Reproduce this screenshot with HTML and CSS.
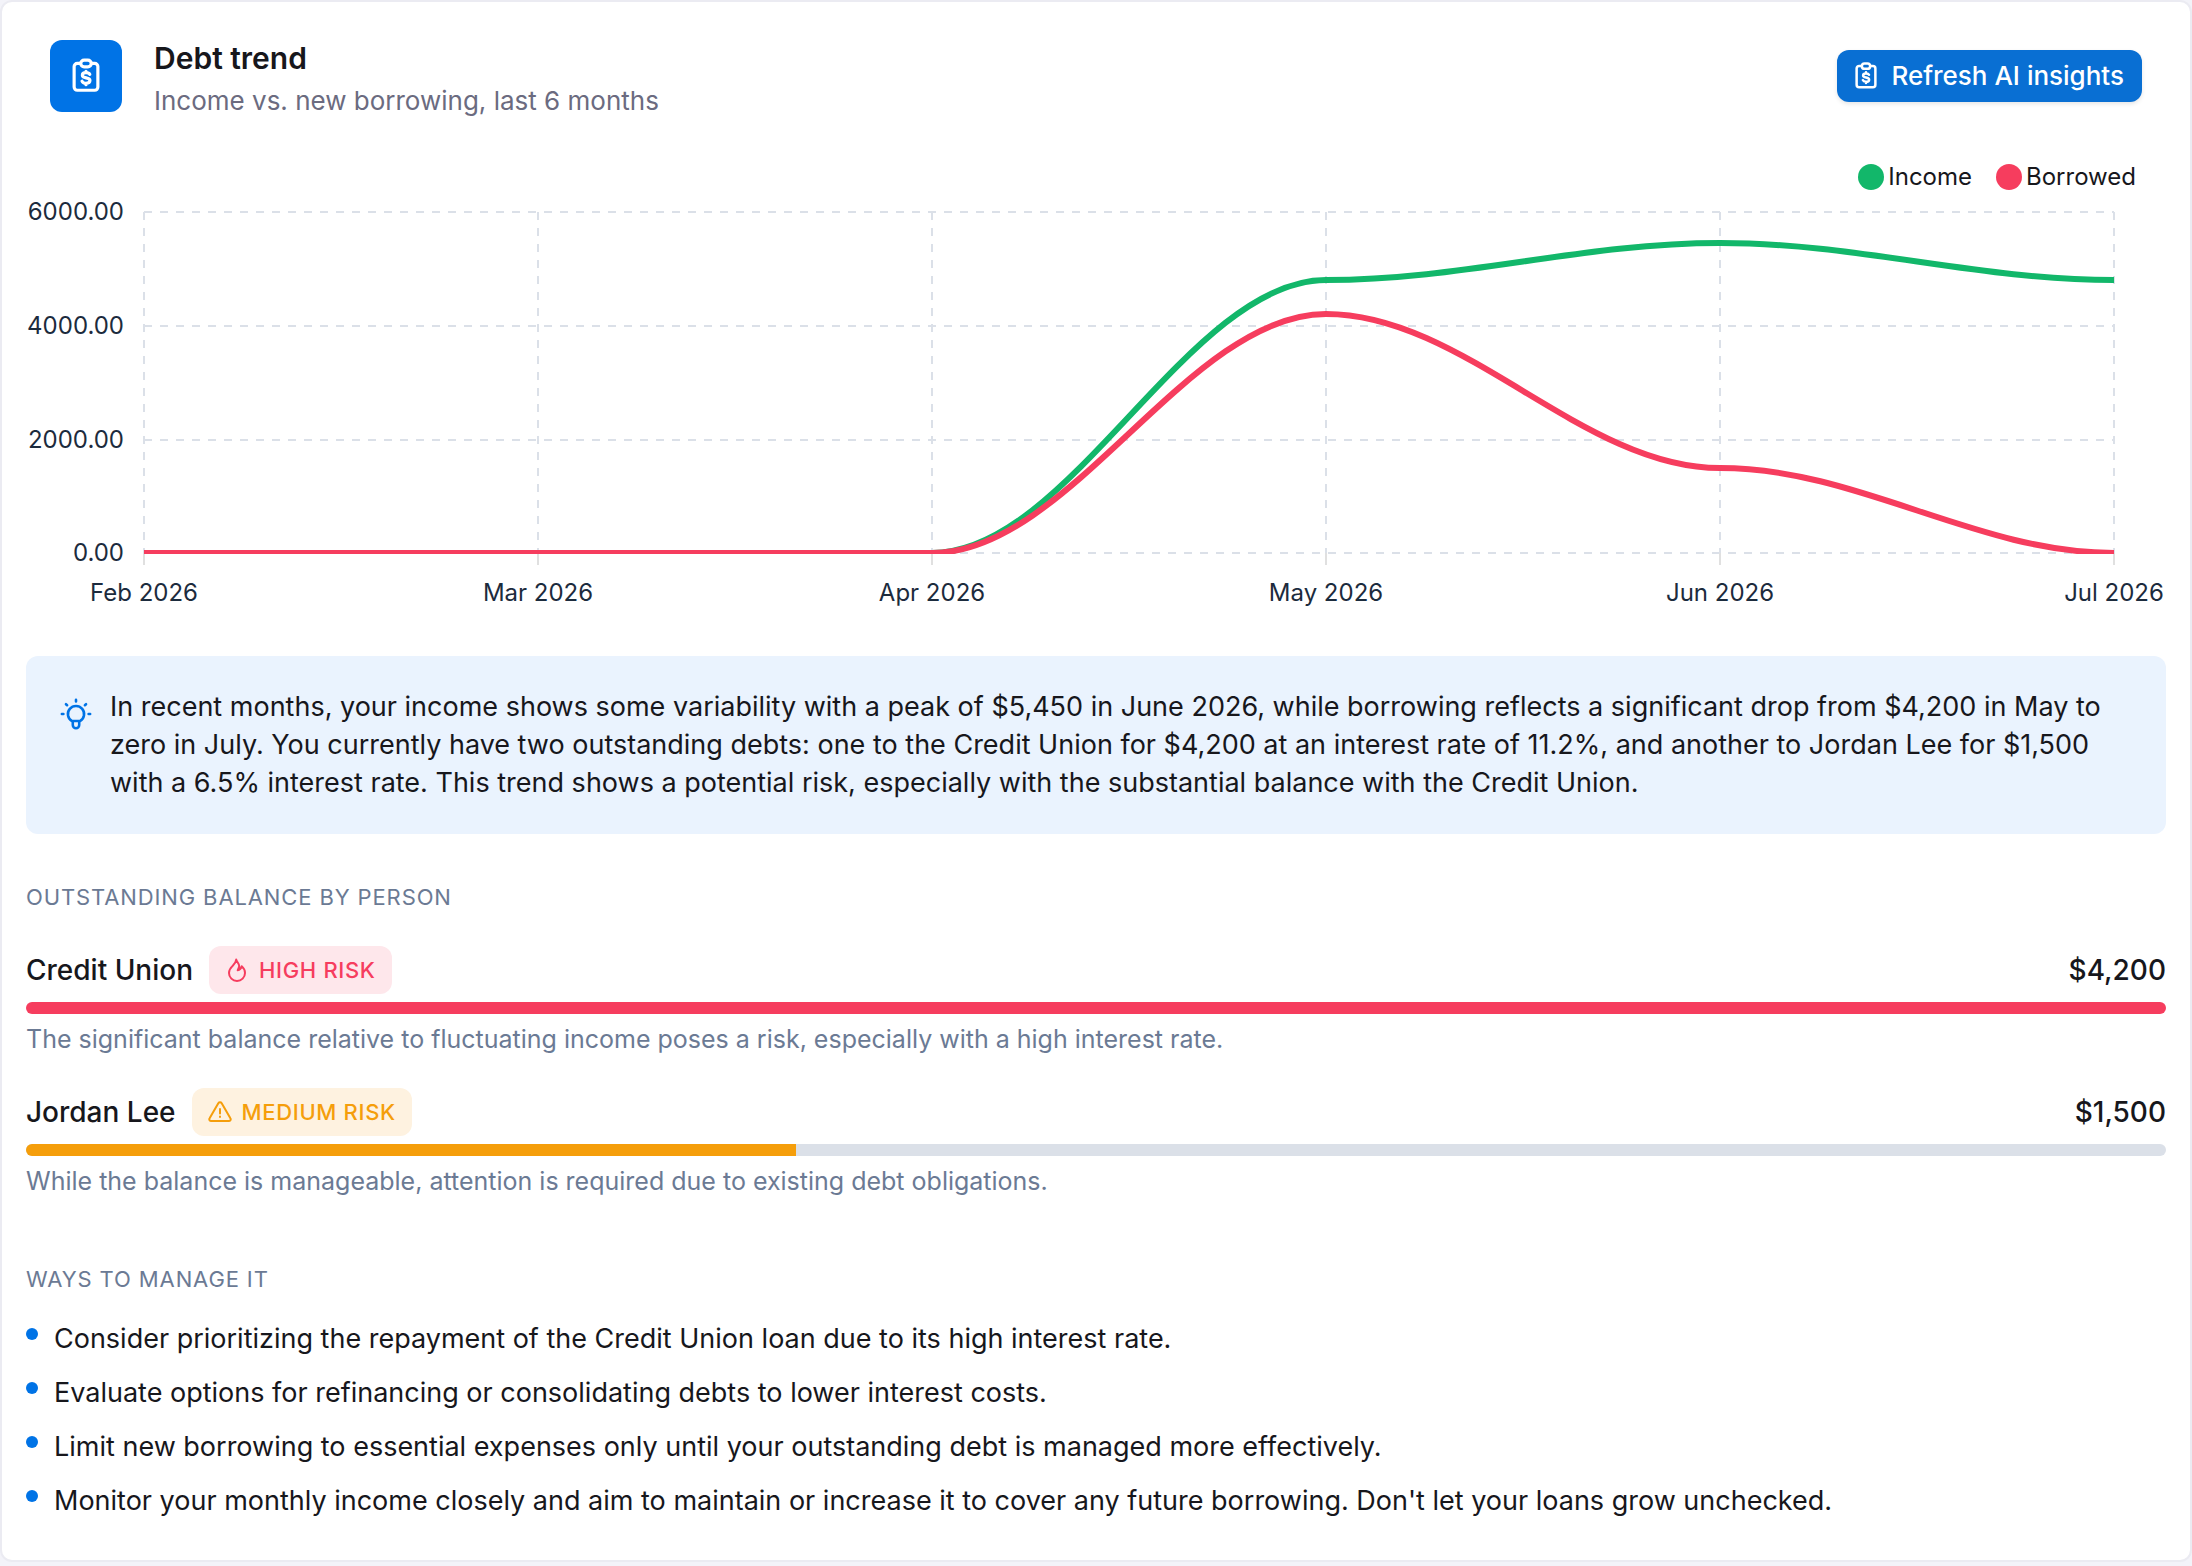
FILE: index.html
```
<!DOCTYPE html>
<html lang="en">
<head>
    <meta charset="UTF-8">
    <meta name="viewport" content="width=device-width, initial-scale=1.0">
    <title>Debt trend</title>
    <link rel="stylesheet" href="styles.css">
</head>
<body>
    <!-- Icons -->
    <svg class="sprite" aria-hidden="true">
        <symbol id="icon-clipboard" viewBox="0 0 24 24">
            <path d="M8.5 4H6.5a2 2 0 0 0-2 2v13a2 2 0 0 0 2 2h11a2 2 0 0 0 2-2V6a2 2 0 0 0-2-2h-2"/>
            <rect x="8.7" y="2" width="6.6" height="4.2" rx="2.1"/>
            <path d="M14.4 11c-.3-.7-1.200-1.100-2.400-1.100-1.400 0-2.300.6-2.300 1.600 0 2.400 4.800 1 4.800 3.400 0 1-1 1.700-2.500 1.700-1.300 0-2.200-.5-2.500-1.300M12 9v.9M12 16.600v.9"/>
        </symbol>
        <symbol id="icon-bulb" viewBox="-2 -2 28 28">
            <path d="M12 1v1.200M23 12h-1.200M2.200 12H1M19.800 4.400l-.9.8M4.200 4.400l.9.8"/>
            <path d="M8.900 17.500a6.300 6.300 0 1 1 6.200 0zM9.500 17.800v2.800a2.500 2.500 0 0 0 5 0v-2.800"/>
        </symbol>
        <symbol id="icon-flame" viewBox="0 0 24 24">
            <path d="M11.2 1.500c.6 2.600 3 4 3 6.500 0 1.800-1.200 2.600-1.500 4.300 2.300-.3 3.400-1.800 4-4 2 1.700 3.300 4 3.300 6.700a8 8 0 0 1-16 0c0-3 1.300-4.900 3.400-6.900 1.800-1.700 3.600-3.300 3.800-6.600z"/>
        </symbol>
        <symbol id="icon-warning" viewBox="0 0 24 24">
            <path d="M10.300 3.200 1.600 18.200a1.900 1.900 0 0 0 1.700 2.900h17.400a1.900 1.900 0 0 0 1.700-2.900L13.700 3.200a2 2 0 0 0-3.400 0zM12 9v4.500M12 16.600v.4"/>
        </symbol>
    </svg>

    <div class="card">
        <div class="header">
            <div class="header-icon">
                <svg class="icon"><use href="#icon-clipboard"/></svg>
            </div>
            <div class="header-text">
                <h2>Debt trend</h2>
                <p>Income vs. new borrowing, last 6 months</p>
            </div>
            <button class="refresh-btn" type="button">
                <svg class="icon"><use href="#icon-clipboard"/></svg>
                Refresh AI insights
            </button>
        </div>

        <!-- Chart -->
        <div class="legend">
            <span class="legend-item"><span class="dot income"></span>Income</span>
            <span class="legend-item"><span class="dot borrowed"></span>Borrowed</span>
        </div>
        <svg class="chart" viewBox="0 0 2140 424" role="img" aria-label="Income and borrowing by month">
            <defs>
                <clipPath id="plot"><rect x="118" y="0" width="1971" height="358"/></clipPath>
            </defs>
            <path class="grid" d="M118 16H2088M118 130H2088M118 244H2088M118 357H2088"/>
            <path class="grid" d="M118 16V357M512 16V357M906 16V357M1300 16V357M1694 16V357M2088 16V357"/>
            <path class="ticks" d="M118 357v12M512 357v12M906 357v12M1300 357v12M1694 357v12M2088 357v12"/>
            <g clip-path="url(#plot)">
                <path class="line income" d="M118 357H906C1044 357 1162 84 1300 84C1438 84 1556 47 1694 47C1832 47 1950 84 2088 84"/>
                <path class="line borrowed" d="M118 357H906C1044 357 1162 118 1300 118C1438 118 1556 272 1694 272C1832 272 1950 357 2088 357"/>
            </g>
            <g class="label-y">
                <text x="98" y="24">6000.00</text>
                <text x="98" y="138">4000.00</text>
                <text x="98" y="252">2000.00</text>
                <text x="98" y="365">0.00</text>
            </g>
            <g class="label-x">
                <text x="118" y="405">Feb 2026</text>
                <text x="512" y="405">Mar 2026</text>
                <text x="906" y="405">Apr 2026</text>
                <text x="1300" y="405">May 2026</text>
                <text x="1694" y="405">Jun 2026</text>
                <text x="2088" y="405">Jul 2026</text>
            </g>
        </svg>

        <div class="insight">
            <svg class="icon"><use href="#icon-bulb"/></svg>
            <p>In recent months, your income shows some variability with a peak of $5,450 in June 2026, while borrowing reflects a significant drop from $4,200 in May to zero in July. You currently have two outstanding debts: one to the Credit Union for $4,200 at an interest rate of 11.2%, and another to Jordan Lee for $1,500 with a 6.5% interest rate. This trend shows a potential risk, especially with the substantial balance with the Credit Union.</p>
        </div>

        <!-- Balances -->
        <h3>Outstanding balance by person</h3>
        <div class="person">
            <div class="person-row">
                <span class="name">Credit Union</span>
                <span class="chip high"><svg class="icon"><use href="#icon-flame"/></svg>High risk</span>
                <span class="amount">$4,200</span>
            </div>
            <div class="bar"><div class="bar-fill high" style="width: 100%"></div></div>
            <p>The significant balance relative to fluctuating income poses a risk, especially with a high interest rate.</p>
        </div>
        <div class="person">
            <div class="person-row">
                <span class="name">Jordan Lee</span>
                <span class="chip medium"><svg class="icon"><use href="#icon-warning"/></svg>Medium risk</span>
                <span class="amount">$1,500</span>
            </div>
            <div class="bar"><div class="bar-fill medium" style="width: 36%"></div></div>
            <p>While the balance is manageable, attention is required due to existing debt obligations.</p>
        </div>

        <!-- Tips -->
        <h3 class="tips-title">Ways to manage it</h3>
        <ul class="tips">
            <li>Consider prioritizing the repayment of the Credit Union loan due to its high interest rate.</li>
            <li>Evaluate options for refinancing or consolidating debts to lower interest costs.</li>
            <li>Limit new borrowing to essential expenses only until your outstanding debt is managed more effectively.</li>
            <li>Monitor your monthly income closely and aim to maintain or increase it to cover any future borrowing. Don't let your loans grow unchecked.</li>
        </ul>
    </div>
</body>
</html>
```
FILE: styles.css
```
* {
    box-sizing: border-box;
}

body {
    margin: 0;
    font-family: Inter, "Liberation Sans", sans-serif;
    font-optical-sizing: none;
    font-size: 27px;
    line-height: 38px;
    color: #17171c;
    background-color: #f3f3f9;
}

h2, h3, p, ul {
    margin: 0;
    padding: 0;
}

.sprite {
    display: none;
}

.icon {
    flex: none;
    fill: none;
    stroke: currentColor;
    stroke-width: 2;
    stroke-linecap: round;
    stroke-linejoin: round;
}

.card {
    background-color: white;
    border: 2px solid #ebebf2;
    border-radius: 12px;
    padding: 30px 24px 40px;
}

/* Header */
.header {
    display: flex;
    align-items: center;
    padding: 0 24px;
}

.header-icon {
    display: flex;
    align-items: center;
    justify-content: center;
    width: 72px;
    height: 72px;
    margin-right: 32px;
    border-radius: 12px;
    background-color: #0073e6;
    color: white;
}

.header-icon .icon {
    width: 38px;
    height: 38px;
}

.header-text {
    flex: 1;
    padding-top: 8px;
}

.header-text h2 {
    font-size: 30px;
    font-weight: 600;
    line-height: 36px;
}

.header-text p {
    margin-top: 6px;
    font-size: 26px;
    color: #6b6b80;
}

.refresh-btn {
    display: flex;
    align-items: center;
    gap: 10px;
    height: 52px;
    padding: 0 18px 0 14px;
    border: none;
    border-radius: 12px;
    background-color: #096fd3;
    color: white;
    font: inherit;
    font-size: 26px;
    font-weight: 500;
    box-shadow: 0 2px 4px rgba(0, 0, 0, 0.1);
    cursor: pointer;
}

.refresh-btn .icon {
    width: 30px;
    height: 30px;
}

/* Chart */
.legend {
    display: flex;
    justify-content: flex-end;
    gap: 24px;
    padding: 38px 30px 0 0;
    font-size: 24px;
}

.legend-item {
    display: flex;
    align-items: center;
    gap: 4px;
}

.dot {
    width: 26px;
    height: 26px;
    border-radius: 50%;
}

.dot.income {
    background-color: #12b76a;
}

.dot.borrowed {
    background-color: #f63d5e;
}

.chart {
    display: block;
    width: 100%;
    overflow: visible;
    fill: #1c2b3d;
    font-size: 24px;
}

.grid {
    fill: none;
    stroke: #dbe0e8;
    stroke-width: 2;
    stroke-dasharray: 8 8;
}

.ticks {
    stroke: #e0e0e0;
    stroke-width: 2;
}

.line {
    fill: none;
    stroke-width: 6;
}

.line.income {
    stroke: #12b76a;
}

.line.borrowed {
    stroke: #f63d5e;
}

.label-y {
    text-anchor: end;
}

.label-x {
    text-anchor: middle;
}

/* AI insight */
.insight {
    display: flex;
    gap: 16px;
    margin-top: 36px;
    padding: 32px;
    border-radius: 12px;
    background-color: #eaf3fe;
}

.insight .icon {
    width: 36px;
    height: 36px;
    margin-top: 8px;
    color: #0073e6;
}

/* Balance by person */
h3 {
    margin-top: 44px;
    font-size: 22px;
    font-weight: 400;
    letter-spacing: 0.04em;
    text-transform: uppercase;
    color: #6b7a94;
}

.person {
    margin-top: 30px;
}

.person-row {
    display: flex;
    align-items: center;
    gap: 16px;
    margin-bottom: 8px;
    font-size: 28px;
    font-weight: 500;
}

.chip {
    display: flex;
    align-items: center;
    gap: 10px;
    padding: 5px 16px;
    border-radius: 12px;
    font-size: 22px;
    letter-spacing: 0.03em;
    text-transform: uppercase;
}

.chip .icon {
    width: 24px;
    height: 24px;
}

.chip.high {
    background-color: #fee7eb;
    color: #f63d5e;
}

.chip.medium {
    background-color: #fef2e0;
    color: #f59e0b;
}

.amount {
    margin-left: auto;
}

.bar {
    height: 12px;
    border-radius: 6px;
    background-color: #dbe0e8;
    overflow: hidden;
}

.bar-fill {
    height: 100%;
}

.bar-fill.high {
    background-color: #f63d5e;
}

.bar-fill.medium {
    background-color: #f59e0b;
}

.person p {
    margin-top: 6px;
    font-size: 25px;
    color: #6b7a94;
}

/* Tips */
.tips-title {
    margin-top: 60px;
}

.tips {
    display: flex;
    flex-direction: column;
    gap: 16px;
    margin-top: 22px;
    list-style: none;
}

.tips li {
    display: flex;
    gap: 16px;
}

.tips li::before {
    content: "";
    flex: none;
    width: 12px;
    height: 12px;
    margin-top: 8px;
    border-radius: 50%;
    background-color: #0073e6;
}
```
